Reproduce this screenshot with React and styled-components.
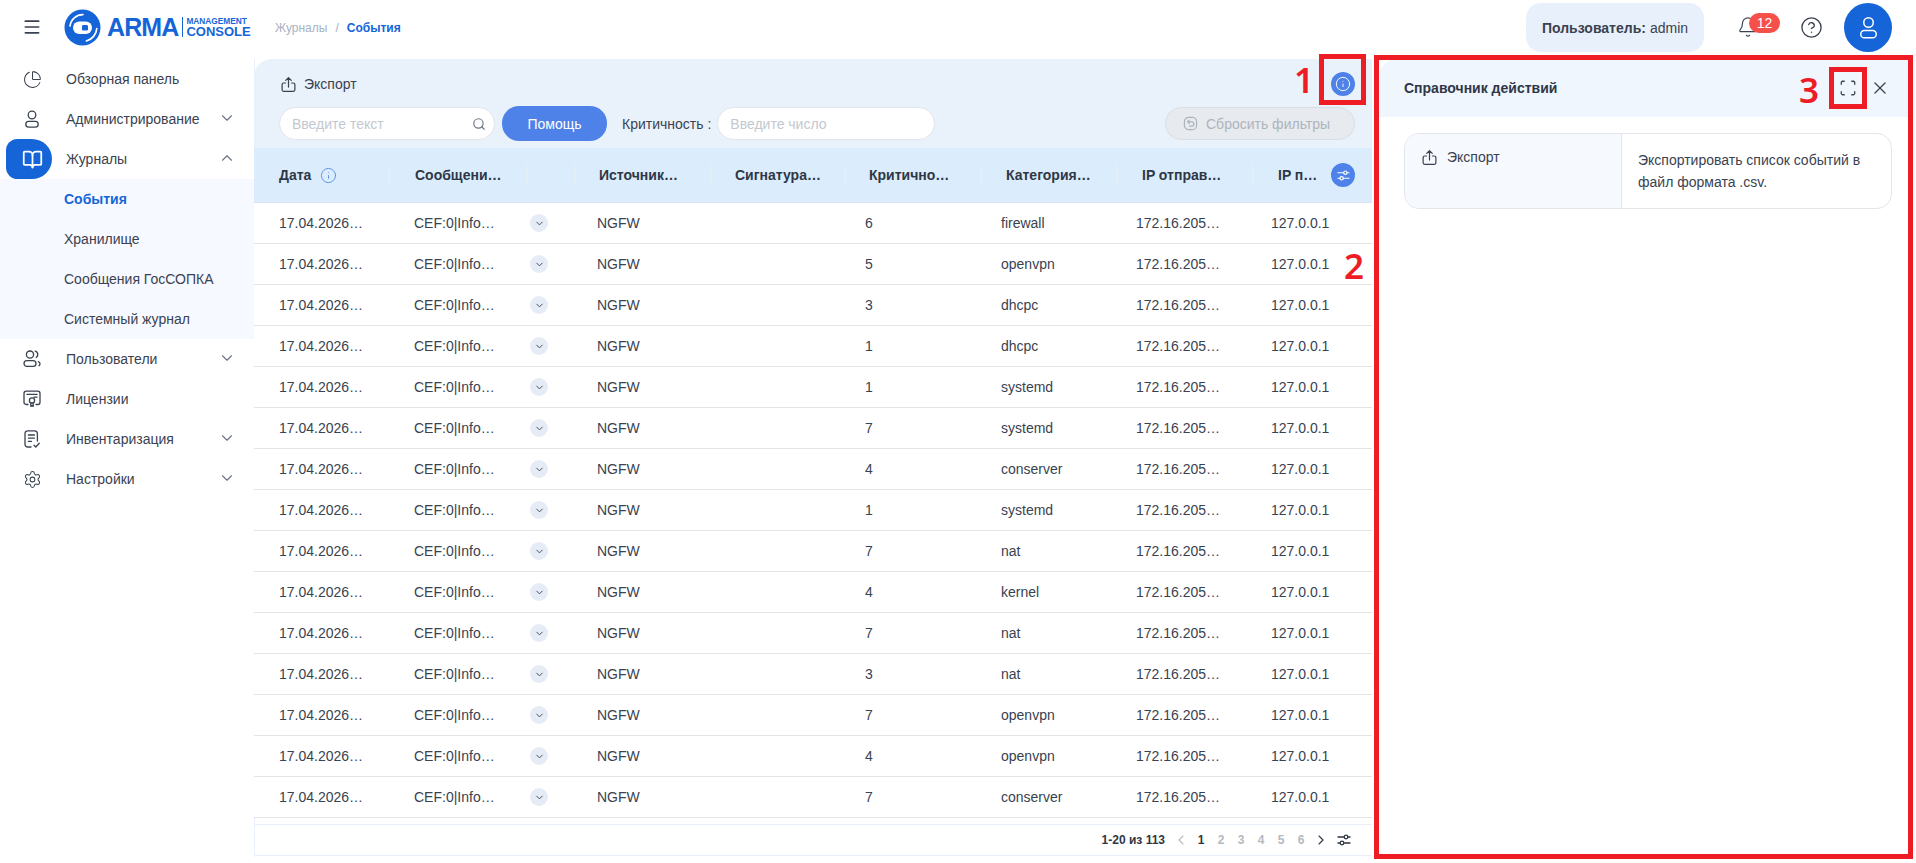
import React from 'react';
import styled, { createGlobalStyle } from 'styled-components';
import {
  ChevronDown, ChevronUp, ChevronLeft, ChevronRight, Info, Search, CircleHelp,
  Bell, X, Scan, Menu, ChartPie, BookOpen, Settings,
} from 'lucide-react';

const GlobalStyle = createGlobalStyle`
  html, body { margin: 0; padding: 0; background: #fff; }
  body {
    font-family: "Liberation Sans", Arial, sans-serif;
    font-size: 14px;
    color: #2f3746;
  }
  * { box-sizing: border-box; }
`;

const Page = styled.div`
  position: relative;
  width: 1916px;
  height: 863px;
  overflow: hidden;
`;

const TopBar = styled.header`
  height: 59px;
  display: flex;
  align-items: center;
  padding-right: 24px;
`;

const Burger = styled.button`
  width: 64px;
  padding: 0;
  border: 0;
  background: none;
  color: #3a4250;
  display: flex;
  justify-content: center;
  margin-top: -5px;
`;

const Logo = styled.div`
  display: flex;
  align-items: center;
  margin-top: -5px;
  width: 211px;
  flex-shrink: 0;
  color: #1565d8;
  font-weight: 700;
`;

const LogoName = styled.span`
  font-size: 25px;
  letter-spacing: -0.9px;
  margin-left: 6px;
  line-height: 1;
`;

const LogoSub = styled.div`
  border-left: 1px solid #1565d8;
  margin-left: 4px;
  padding-left: 3px;
  display: flex;
  flex-direction: column;
  height: 20px;
  justify-content: center;
`;

const LogoSmall = styled.span`
  font-size: 8.3px;
  line-height: 9px;
  white-space: nowrap;
`;

const LogoBig = styled.span`
  font-size: 13px;
  line-height: 11px;
  white-space: nowrap;
`;

const Crumbs = styled.nav`
  display: flex;
  gap: 8px;
  font-size: 12px;
  color: #a9b2bf;
  margin-top: -4px;
`;

const CrumbCurrent = styled.span`
  color: #1565d8;
  font-weight: 700;
`;

const TopRight = styled.div`
  margin-left: auto;
  display: flex;
  align-items: center;
  margin-top: -4px;
`;

const UserChip = styled.div`
  width: 178px;
  height: 49px;
  border-radius: 15px;
  background: #e8f1fb;
  display: flex;
  align-items: center;
  justify-content: center;
  font-size: 14px;
  color: #3a4250;
  strong { font-weight: 700; margin-right: 4px; }
`;

const BellWrap = styled.div`
  position: relative;
  margin-left: 33px;
  width: 20px;
  height: 24px;
  color: #3a4250;
`;

const Badge = styled.span`
  position: absolute;
  left: 12px;
  top: -3px;
  width: 31px;
  height: 20px;
  border-radius: 10px;
  background: #f6504a;
  color: #fff;
  font-size: 14px;
  display: flex;
  align-items: center;
  justify-content: center;
`;

const HelpWrap = styled.div`
  margin-left: 43px;
  color: #3a4250;
  display: flex;
`;

const Avatar = styled.div`
  margin-left: 21px;
  width: 48px;
  height: 49px;
  border-radius: 50%;
  background: #1565d8;
  color: #fff;
  display: flex;
  align-items: center;
  justify-content: center;
`;

const Body = styled.div`
  display: flex;
  height: 804px;
`;

const Sidebar = styled.aside`
  width: 254px;
  flex-shrink: 0;
`;

const NavRow = styled.div`
  height: 40px;
  display: flex;
  align-items: center;
  padding-left: 6px;
  padding-right: 18px;
  color: #3a4250;
  font-size: 14px;
`;

const NavIcon = styled.span`
  width: 46px;
  height: 40px;
  flex-shrink: 0;
  padding-left: 6px;
  display: flex;
  align-items: center;
  justify-content: center;
  border-radius: 12px 21px 21px 12px;
  color: ${p => (p.$active ? '#fff' : '#3a4250')};
  background: ${p => (p.$active ? '#1565d8' : 'transparent')};
`;

const NavLabel = styled.span`
  margin-left: 14px;
  flex: 1;
`;

const NavArrow = styled.span`
  display: flex;
  color: #6c7482;
  margin-top: -3px;
`;

const SubMenu = styled.div`
  background: #f6f9ff;
`;

const SubItem = styled.div`
  height: 40px;
  display: flex;
  align-items: center;
  padding-left: 64px;
  font-size: 14px;
  color: ${p => (p.$active ? '#1565d8' : '#3a4250')};
  font-weight: ${p => (p.$active ? 700 : 400)};
`;

const Main = styled.main`
  width: 1118px;
  height: 798px;
  flex-shrink: 0;
  display: flex;
  flex-direction: column;
  border-left: 1px solid #e9f0fa;
`;

const Toolbar = styled.div`
  height: 89px;
  background: #e9f1fb;
  border-radius: 18px 0 0 0;
  margin-left: -1px;
  padding: 0 17px 0 25px;
`;

const ToolTop = styled.div`
  height: 47px;
  display: flex;
  align-items: center;
  justify-content: space-between;
  padding-top: 3px;
`;

const ExportBtn = styled.div`
  display: flex;
  align-items: center;
  gap: 7px;
  margin-left: 1px;
  font-size: 14px;
  color: #3a4250;
`;

const InfoBtn = styled.span`
  width: 24px;
  height: 24px;
  border-radius: 50%;
  background: #4f82e8;
  color: #fff;
  display: flex;
  align-items: center;
  justify-content: center;
`;

const ToolFilters = styled.div`
  display: flex;
  align-items: center;
`;

const Field = styled.div`
  width: ${p => p.$w}px;
  height: 33px;
  border-radius: 17px;
  background: #fff;
  border: 1px solid #e2e6ec;
  display: flex;
  align-items: center;
  justify-content: space-between;
  padding: 0 8px 0 12px;
  font-size: 14px;
  color: #c3c8d0;
`;

const PrimaryBtn = styled.button`
  width: 105px;
  height: 35px;
  margin-left: 7px;
  border: 0;
  border-radius: 17px;
  background: #4f82e8;
  color: #fff;
  font: inherit;
  font-size: 14px;
`;

const FilterLabel = styled.span`
  margin: 0 6px 0 15px;
  font-size: 14px;
  color: #3a4250;
  white-space: nowrap;
`;

const ResetBtn = styled.button`
  margin-left: auto;
  width: 190px;
  height: 33px;
  padding: 0 0 0 17px;
  border-radius: 17px;
  border: 1px solid #dadde2;
  background: #e7eaee;
  color: #aeb4bc;
  font: inherit;
  font-size: 14px;
  display: flex;
  align-items: center;
  gap: 8px;
`;

const columns = '136px 137px 48px 136px 135px 136px 135px 136px 1fr';

const HeadRow = styled.div`
  position: relative;
  height: 55px;
  display: grid;
  grid-template-columns: ${columns};
  align-items: center;
  margin-left: -1px;
  background: #dbedfc;
  border-bottom: 1px solid #d9e2ea;
`;

const HeadCell = styled.div`
  height: 22px;
  display: flex;
  align-items: center;
  gap: 9px;
  padding-left: ${p => p.$pad || 24}px;
  font-weight: 700;
  font-size: 14px;
  color: #2f3746;
  white-space: nowrap;
  border-right: ${p => (p.$last ? 0 : '1px solid #e6f0f9')};
`;

const DateInfo = styled.span`
  color: #4f82e8;
  display: flex;
`;

const ColumnsBtn = styled(InfoBtn)`
  position: absolute;
  right: 17px;
  top: 15px;
`;

const Row = styled.div`
  height: 41px;
  display: grid;
  grid-template-columns: ${columns};
  align-items: center;
  border-bottom: 1px solid #e2e4e8;
  margin-left: -1px;
  background: #fff;
`;

const Cell = styled.div`
  padding-left: ${p => p.$pad || 19}px;
  font-size: 14px;
  color: #3a4250;
  white-space: nowrap;
`;

const ExpandDot = styled.span`
  width: 18px;
  height: 18px;
  margin-left: 2px;
  border-radius: 50%;
  background: #e6ecf5;
  color: #3a4250;
  display: flex;
  align-items: center;
  justify-content: center;
`;

const Pager = styled.div`
  margin-top: 6px;
  height: 32px;
  border-top: 1px solid #e9f0fa;
  border-bottom: 1px solid #e9f0fa;
  display: flex;
  align-items: center;
  justify-content: flex-end;
  padding-right: 18px;
  font-size: 12px;
`;

const PagerTotal = styled.span`
  font-weight: 700;
  margin-right: 6px;
`;

const PageNum = styled.span`
  width: 20px;
  text-align: center;
  font-weight: 700;
  color: ${p => (p.$current ? '#2f3746' : '#b4b9c1')};
`;

const PagerIcon = styled.span`
  display: flex;
  width: 20px;
  margin-left: ${p => p.$gap || 0}px;
  justify-content: center;
  color: ${p => (p.$off ? '#b4b9c1' : '#2f3746')};
`;

const Panel = styled.section`
  width: 529px;
  height: 796px;
  margin-left: 7px;
  flex-shrink: 0;
`;

const PanelHead = styled.div`
  height: 58px;
  background: #eff6fe;
  border-radius: 18px 0 0 0;
  padding: 0 18px 0 25px;
  display: flex;
  align-items: center;
`;

const PanelTitle = styled.h2`
  margin: 0;
  flex: 1;
  font-size: 14px;
  font-weight: 700;
  color: #2f3746;
`;

const PanelAction = styled.span`
  display: flex;
  color: #3a4250;
  margin-left: ${p => p.$gap || 0}px;
`;

const ActionCard = styled.div`
  margin: 16px 16px 0 25px;
  height: 76px;
  border: 1px solid #e2e5ea;
  border-radius: 15px;
  display: grid;
  grid-template-columns: 217px 1fr;
  overflow: hidden;
`;

const ActionName = styled.div`
  background: #f6f9fe;
  border-right: 1px solid #e2e5ea;
  padding: 15px 0 0 16px;
  display: flex;
  align-items: flex-start;
  gap: 9px;
  font-size: 14px;
  color: #3a4250;
`;

const ActionText = styled.div`
  padding: 15px 16px 0 16px;
  font-size: 14px;
  line-height: 22px;
  color: #3a4250;
`;

/* red marks over the screenshot */
const Mark = styled.div`
  position: absolute;
  left: ${p => p.$x}px;
  top: ${p => p.$y}px;
  width: ${p => p.$w}px;
  height: ${p => p.$h}px;
  border: 5px solid #ee1c25;
  pointer-events: none;
`;

const MarkNum = styled.span`
  position: absolute;
  left: ${p => p.$x}px;
  top: ${p => p.$y}px;
  font-family: "Noto Sans", sans-serif;
  font-weight: 600;
  font-size: 35px;
  line-height: 40px;
  color: #ee1c25;
`;

const ExportIcon = ({ size = 17 }) => (
  <svg width={size} height={size} viewBox="0 0 16 16" fill="none" stroke="currentColor" strokeWidth="1.15" strokeLinecap="round" strokeLinejoin="round">
    <path d="M5.2 6.6H3.4c-.8 0-1.4.6-1.4 1.4v5c0 .8.6 1.4 1.4 1.4h9.2c.8 0 1.4-.6 1.4-1.4V8c0-.8-.6-1.4-1.4-1.4h-1.8" />
    <path d="M8 10.4V1.6M5.4 4.1 8 1.6l2.6 2.5" />
  </svg>
);

const ProfileIcon = ({ size = 20, weight = 1.3 }) => (
  <svg width={size} height={size} viewBox="0 0 20 20" fill="none" stroke="currentColor" strokeWidth={weight}>
    <circle cx="10" cy="6" r="3.8" />
    <rect x="3.8" y="12.4" width="12.4" height="5.8" rx="2.9" />
  </svg>
);

const SlidersIcon = ({ size = 14, weight = 1.3 }) => (
  <svg width={size} height={size} viewBox="0 0 14 14" fill="none" stroke="currentColor" strokeWidth={weight} strokeLinecap="round">
    <path d="M1 4h6.2M10.8 4H13M1 10h2.2M6.8 10H13" />
    <circle cx="9" cy="4" r="1.8" />
    <circle cx="5" cy="10" r="1.8" />
  </svg>
);

const UsersIcon = () => (
  <svg width="20" height="20" viewBox="0 0 20 20" fill="none" stroke="currentColor" strokeWidth="1.3" strokeLinecap="round">
    <circle cx="8" cy="5.6" r="3.6" />
    <rect x="2" y="11.6" width="12" height="5.8" rx="2.9" />
    <path d="M13.2 2.2a3.5 3.5 0 0 1 2.6 3.3c0 1.2-.5 2.2-1.5 2.9M16.4 12.6c1.2.6 1.8 1.6 1.6 2.6-.1.6-.5 1.1-1 1.5" />
  </svg>
);

const LicenseIcon = () => (
  <svg width="20" height="20" viewBox="0 0 20 20" fill="none" stroke="currentColor" strokeWidth="1.3" strokeLinecap="round" strokeLinejoin="round">
    <path d="M6 15.5H4.2C2.9 15.5 2 14.6 2 13.3V4.4C2 3.1 2.9 2.2 4.2 2.2h11.6c1.3 0 2.2.9 2.2 2.2v8.9c0 1.3-.9 2.2-2.2 2.2H14" />
    <path d="M5 5.4h10M12 8.2h3" />
    <circle cx="10" cy="11.4" r="2.6" />
    <path d="M8.8 13.8v3.6l1.2-.8 1.2.8v-3.6" />
  </svg>
);

const InventoryIcon = () => (
  <svg width="20" height="20" viewBox="0 0 20 20" fill="none" stroke="currentColor" strokeWidth="1.3" strokeLinecap="round" strokeLinejoin="round">
    <path d="M9 18H6c-1.8 0-3-1.2-3-3V4.6C3 2.9 4.2 1.8 6 1.8h6.4c1.8 0 3 1.1 3 2.8V12" />
    <path d="M6.4 6h6M6.4 9.2h6M6.4 12.4h3" />
    <path d="m12 16.2 1.8 1.8 3.4-3.8" />
  </svg>
);

const ResetIcon = () => (
  <svg width="15" height="15" viewBox="0 0 16 16" fill="none" stroke="currentColor" strokeWidth="1.3" strokeLinecap="round" strokeLinejoin="round">
    <rect x="1.5" y="1.5" width="13" height="13" rx="4.5" />
    <path d="M6.6 4.6 4.8 6.3l1.8 1.7M5 6.3h4.4a2.1 2.1 0 0 1 0 4.4H7" />
  </svg>
);

const LogoMark = () => (
  <svg width="37" height="37" viewBox="0 0 37 37">
    <circle cx="18.5" cy="18.5" r="18" fill="#1565d8" />
    <path d="M6 17A12.8 12.8 0 0 1 19 5.6" fill="none" stroke="#fff" strokeWidth="1.7" strokeLinecap="round" />
    <path d="M32.8 19.5A14 14 0 0 1 22.4 32" fill="none" stroke="#fff" strokeWidth="1.7" strokeLinecap="round" />
    <rect x="9" y="12.5" width="19" height="12.5" rx="6.2" fill="#fff" />
    <rect x="18" y="16" width="6" height="5.6" rx="1.4" fill="#1565d8" />
  </svg>
);

const severity = [6, 5, 3, 1, 1, 7, 4, 1, 7, 4, 7, 3, 7, 4, 7];
const categories = [
  'firewall', 'openvpn', 'dhcpc', 'dhcpc', 'systemd', 'systemd', 'conserver', 'systemd',
  'nat', 'kernel', 'nat', 'nat', 'openvpn', 'openvpn', 'conserver',
];

const headers = [
  { label: 'Сообщени…', pad: 25 },
  { label: '', pad: 24 },
  { label: 'Источник…', pad: 24 },
  { label: 'Сигнатура…', pad: 24 },
  { label: 'Критично…', pad: 23 },
  { label: 'Категория…', pad: 24 },
  { label: 'IP отправ…', pad: 25 },
];

export default function App() {
  return (
    <Page>
      <GlobalStyle />
      <TopBar>
        <Burger><Menu size={20} strokeWidth={2} /></Burger>
        <Logo>
          <LogoMark />
          <LogoName>ARMA</LogoName>
          <LogoSub>
            <LogoSmall>MANAGEMENT</LogoSmall>
            <LogoBig>CONSOLE</LogoBig>
          </LogoSub>
        </Logo>
        <Crumbs>
          <span>Журналы</span>
          <span>/</span>
          <CrumbCurrent>События</CrumbCurrent>
        </Crumbs>
        <TopRight>
          <UserChip><strong>Пользователь:</strong> admin</UserChip>
          <BellWrap>
            <Bell size={22} strokeWidth={1.3} />
            <Badge>12</Badge>
          </BellWrap>
          <HelpWrap><CircleHelp size={23} strokeWidth={1.4} /></HelpWrap>
          <Avatar><ProfileIcon size={25} weight={1.2} /></Avatar>
        </TopRight>
      </TopBar>

      <Body>
        <Sidebar>
          <NavRow>
            <NavIcon><ChartPie size={19} strokeWidth={1.3} /></NavIcon>
            <NavLabel>Обзорная панель</NavLabel>
          </NavRow>
          <NavRow>
            <NavIcon><ProfileIcon /></NavIcon>
            <NavLabel>Администрирование</NavLabel>
            <NavArrow><ChevronDown size={18} strokeWidth={1.5} /></NavArrow>
          </NavRow>
          <NavRow>
            <NavIcon $active><BookOpen size={21} strokeWidth={2} /></NavIcon>
            <NavLabel>Журналы</NavLabel>
            <NavArrow><ChevronUp size={18} strokeWidth={1.5} /></NavArrow>
          </NavRow>
          <SubMenu>
            <SubItem $active>События</SubItem>
            <SubItem>Хранилище</SubItem>
            <SubItem>Сообщения ГосСОПКА</SubItem>
            <SubItem>Системный журнал</SubItem>
          </SubMenu>
          <NavRow>
            <NavIcon><UsersIcon /></NavIcon>
            <NavLabel>Пользователи</NavLabel>
            <NavArrow><ChevronDown size={18} strokeWidth={1.5} /></NavArrow>
          </NavRow>
          <NavRow>
            <NavIcon><LicenseIcon /></NavIcon>
            <NavLabel>Лицензии</NavLabel>
          </NavRow>
          <NavRow>
            <NavIcon><InventoryIcon /></NavIcon>
            <NavLabel>Инвентаризация</NavLabel>
            <NavArrow><ChevronDown size={18} strokeWidth={1.5} /></NavArrow>
          </NavRow>
          <NavRow>
            <NavIcon><Settings size={19} strokeWidth={1.3} /></NavIcon>
            <NavLabel>Настройки</NavLabel>
            <NavArrow><ChevronDown size={18} strokeWidth={1.5} /></NavArrow>
          </NavRow>
        </Sidebar>

        <Main>
          <Toolbar>
            <ToolTop>
              <ExportBtn><ExportIcon />Экспорт</ExportBtn>
              <InfoBtn><Info size={16} strokeWidth={1.4} /></InfoBtn>
            </ToolTop>
            <ToolFilters>
              <Field $w={216}>
                Введите текст
                <Search size={14} color="#6c7482" />
              </Field>
              <PrimaryBtn>Помощь</PrimaryBtn>
              <FilterLabel>Критичность :</FilterLabel>
              <Field $w={218}>Введите число</Field>
              <ResetBtn><ResetIcon />Сбросить фильтры</ResetBtn>
            </ToolFilters>
          </Toolbar>

          <HeadRow>
            <HeadCell $pad={25}>
              Дата
              <DateInfo><Info size={17} strokeWidth={1.2} /></DateInfo>
            </HeadCell>
            {headers.map((h, i) => (
              <HeadCell key={i} $pad={h.pad}>{h.label}</HeadCell>
            ))}
            <HeadCell $pad={25} $last>IP п…</HeadCell>
            <ColumnsBtn><SlidersIcon size={13} weight={1.2} /></ColumnsBtn>
          </HeadRow>

          {severity.map((level, i) => (
            <Row key={i}>
              <Cell $pad={25}>17.04.2026…</Cell>
              <Cell $pad={24}>CEF:0|Info…</Cell>
              <Cell $pad={1}><ExpandDot><ChevronDown size={11} /></ExpandDot></Cell>
              <Cell $pad={22}>NGFW</Cell>
              <Cell />
              <Cell>{level}</Cell>
              <Cell>{categories[i]}</Cell>
              <Cell>172.16.205…</Cell>
              <Cell $pad={18}>127.0.0.1</Cell>
            </Row>
          ))}

          <Pager>
            <PagerTotal>1-20 из 113</PagerTotal>
            <PagerIcon $off><ChevronLeft size={16} strokeWidth={1.6} /></PagerIcon>
            <PageNum $current>1</PageNum>
            <PageNum>2</PageNum>
            <PageNum>3</PageNum>
            <PageNum>4</PageNum>
            <PageNum>5</PageNum>
            <PageNum>6</PageNum>
            <PagerIcon><ChevronRight size={16} strokeWidth={1.6} /></PagerIcon>
            <PagerIcon $gap={3}><SlidersIcon /></PagerIcon>
          </Pager>
        </Main>

        <Panel>
          <PanelHead>
            <PanelTitle>Справочник действий</PanelTitle>
            <PanelAction><Scan size={18} strokeWidth={1.7} /></PanelAction>
            <PanelAction $gap={13}><X size={20} strokeWidth={1.5} /></PanelAction>
          </PanelHead>
          <ActionCard>
            <ActionName><ExportIcon />Экспорт</ActionName>
            <ActionText>Экспортировать список событий в файл формата .csv.</ActionText>
          </ActionCard>
        </Panel>
      </Body>

      <Mark $x={1319} $y={54} $w={47} $h={51} />
      <Mark $x={1374} $y={55} $w={539} $h={804} />
      <Mark $x={1829} $y={67} $w={38} $h={42} />
      <MarkNum $x={1294} $y={60}>1</MarkNum>
      <MarkNum $x={1344} $y={246}>2</MarkNum>
      <MarkNum $x={1799} $y={70}>3</MarkNum>
    </Page>
  );
}
